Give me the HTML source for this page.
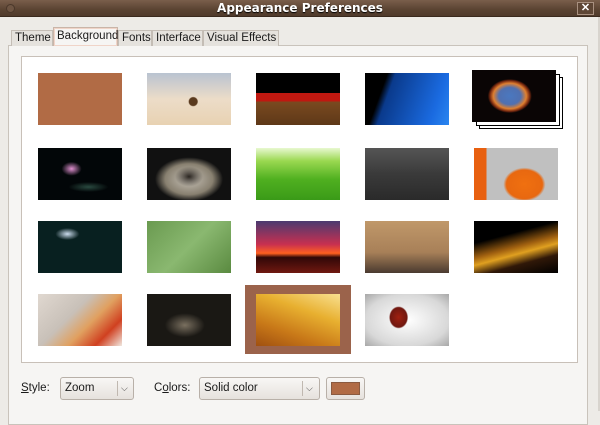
<!DOCTYPE html>
<html><head><style>
*{margin:0;padding:0;box-sizing:border-box}
body{width:600px;height:411px;background:#edebe7;font-family:"Liberation Sans",sans-serif;font-size:11.5px;color:#1a1a1a;position:relative;overflow:hidden;white-space:nowrap}
.a{position:absolute}
.t{width:84px;height:52px}
</style></head><body>
<div class="a" style="left:0;top:0;width:600px;height:17px;background:linear-gradient(#7a5e4b,#5a4332 60%,#4f3a2b);border-bottom:1px solid #3a2a1e"></div>
<div class="a" style="left:6px;top:4px;width:9px;height:9px;border-radius:50%;background:#6e5543;border:1px solid #4a372a"></div>
<div class="a" style="left:0;top:0;width:600px;text-align:center;font-family:'DejaVu Sans',sans-serif;font-weight:bold;color:#fff;font-size:12px;line-height:16px;text-shadow:0 1px 1px #000">Appearance Preferences</div>
<div class="a" style="left:577px;top:2px;width:17px;height:13px;border:1px solid #a89080;background:#5e4635;color:#fff;font-weight:bold;font-size:11px;line-height:11px;text-align:center">✕</div>
<div class="a" style="left:598px;top:17px;width:2px;height:394px;background:#d8d4ce"></div>
<div class="a" style="left:8px;top:45px;width:580px;height:380px;border:1px solid #c9c3bb;background:#f6f5f3"></div>
<div class="a" style="left:11px;top:30px;width:42px;height:16px;border:1px solid #c4bdb5;border-bottom:none;background:#e5e2dd;line-height:14px;padding-left:3px">Theme</div>
<div class="a" style="left:53px;top:27px;width:65px;height:19px;border:1px solid #c9b5a8;border-bottom:none;background:#f6f5f3;line-height:16px;padding-left:3px;box-shadow:inset 0 0 0 1px #f0d4c8">Background</div>
<div class="a" style="left:118px;top:30px;width:34px;height:16px;border:1px solid #c4bdb5;border-bottom:none;background:#e5e2dd;line-height:14px;padding-left:3px">Fonts</div>
<div class="a" style="left:152px;top:30px;width:51px;height:16px;border:1px solid #c4bdb5;border-bottom:none;background:#e5e2dd;line-height:14px;padding-left:3px">Interface</div>
<div class="a" style="left:203px;top:30px;width:76px;height:16px;border:1px solid #c4bdb5;border-bottom:none;background:#e5e2dd;line-height:14px;padding-left:3px">Visual Effects</div>
<div class="a" style="left:21px;top:56px;width:557px;height:307px;border:1px solid #c8c0b8;background:#fff"></div>
<div class="a t" style="left:38px;top:73px;background:#b16b45"></div>
<div class="a t" style="left:147px;top:73px;background:radial-gradient(circle at 55% 55%,#5a3a1e 0 4px,transparent 5px),linear-gradient(#b9c3d1,#ecdcc8 50%,#e8d2b2)"></div>
<div class="a t" style="left:256px;top:73px;background:linear-gradient(#000 0 38%,#c01810 38% 55%,#7a4a20 55%,#5e3818)"></div>
<div class="a t" style="left:365px;top:73px;background:linear-gradient(110deg,#000 0 22%,#0a3a8c 30%,#1a6ae0 80%,#2a86f0)"></div>
<div class="a" style="left:479px;top:77px;width:84px;height:52px;background:#fff;border:1px solid #000"></div>
<div class="a" style="left:476px;top:74px;width:84px;height:52px;background:#fff;border:1px solid #000"></div>
<div class="a t" style="left:472px;top:70px;background:radial-gradient(ellipse 22px 17px at 45% 50%,#4a78c0 0,#5070b0 50%,#e08030 75%,#7a2a10 90%,#0a0505 100%)"></div>
<div class="a t" style="left:38px;top:148px;background:radial-gradient(ellipse 10px 7px at 40% 40%,#e090d0,transparent),radial-gradient(ellipse 20px 5px at 60% 75%,#2a4a40,transparent),#020608"></div>
<div class="a t" style="left:147px;top:148px;background:radial-gradient(ellipse 14px 10px at 50% 55%,#2a2520,transparent),radial-gradient(ellipse 34px 22px at 50% 60%,#c8c2b8,#888070 70%,#111 100%)"></div>
<div class="a t" style="left:256px;top:148px;background:linear-gradient(#e8f8d0,#9ad850 25%,#50b020 60%,#3a9a18)"></div>
<div class="a t" style="left:365px;top:148px;background:linear-gradient(#555,#3a3a3a 50%,#2a2a2a)"></div>
<div class="a t" style="left:474px;top:148px;background:radial-gradient(ellipse 30px 24px at 60% 70%,#f07010,#e86810 60%,transparent 70%),linear-gradient(90deg,#e86010 0 15%,#c0c0c0 15%)"></div>
<div class="a t" style="left:38px;top:221px;background:radial-gradient(ellipse 12px 6px at 35% 25%,#cde,transparent),#082020"></div>
<div class="a t" style="left:147px;top:221px;background:linear-gradient(135deg,#6a9a50,#8ab870 50%,#5a8a40)"></div>
<div class="a t" style="left:256px;top:221px;background:linear-gradient(#4a3a70,#c83050 45%,#ff6020 62%,#300808 70%,#701810)"></div>
<div class="a t" style="left:365px;top:221px;background:linear-gradient(#c0986a,#a88058 60%,#4a3a30)"></div>
<div class="a t" style="left:474px;top:221px;background:linear-gradient(165deg,#000 0 30%,#a06010 50%,#e0a020 60%,#301808 75%,#000)"></div>
<div class="a t" style="left:38px;top:294px;background:linear-gradient(135deg,#e0d8d0,#c8c0b8 40%,#e0a060 60%,#d04020 80%,#f0e8e0)"></div>
<div class="a t" style="left:147px;top:294px;background:radial-gradient(ellipse 25px 15px at 45% 60%,#7a7060,#1a1814 80%)"></div>
<div class="a" style="left:245px;top:285px;width:106px;height:69px;background:#9b634b"></div>
<div class="a t" style="left:256px;top:294px;background:linear-gradient(200deg,#f8e090 0,#e8b030 35%,#c87818 70%,#a05010)"></div>
<div class="a t" style="left:365px;top:294px;background:radial-gradient(ellipse 12px 14px at 40% 45%,#a02010,#701810 70%,transparent 80%),radial-gradient(#fff,#d8d8d8 70%,#a8a8a8)"></div>
<div class="a" style="left:21px;top:382px;line-height:13px"><u>S</u>tyle:</div>
<div class="a" style="left:60px;top:377px;width:74px;height:23px;border:1px solid #b8b0a8;border-radius:3px;background:linear-gradient(#f8f7f5,#e6e2dd);padding-left:4px;line-height:20px">Zoom</div>
<div class="a" style="left:117px;top:381px;width:1px;height:15px;background:#c0b8b0"></div>
<div class="a" style="left:121px;top:377px;line-height:22px;font-size:9px;color:#444">⌵</div>
<div class="a" style="left:154px;top:382px;line-height:13px">C<u>o</u>lors:</div>
<div class="a" style="left:199px;top:377px;width:121px;height:23px;border:1px solid #b8b0a8;border-radius:3px;background:linear-gradient(#f8f7f5,#e6e2dd);padding-left:4px;line-height:20px">Solid color</div>
<div class="a" style="left:302px;top:381px;width:1px;height:15px;background:#c0b8b0"></div>
<div class="a" style="left:306px;top:377px;line-height:22px;font-size:9px;color:#444">⌵</div>
<div class="a" style="left:326px;top:377px;width:39px;height:23px;border:1px solid #b8b0a8;border-radius:3px;background:linear-gradient(#f8f7f5,#e6e2dd)"></div>
<div class="a" style="left:331px;top:382px;width:29px;height:13px;background:#b16b45;border:1px solid #8a5a40"></div>
</body></html>
